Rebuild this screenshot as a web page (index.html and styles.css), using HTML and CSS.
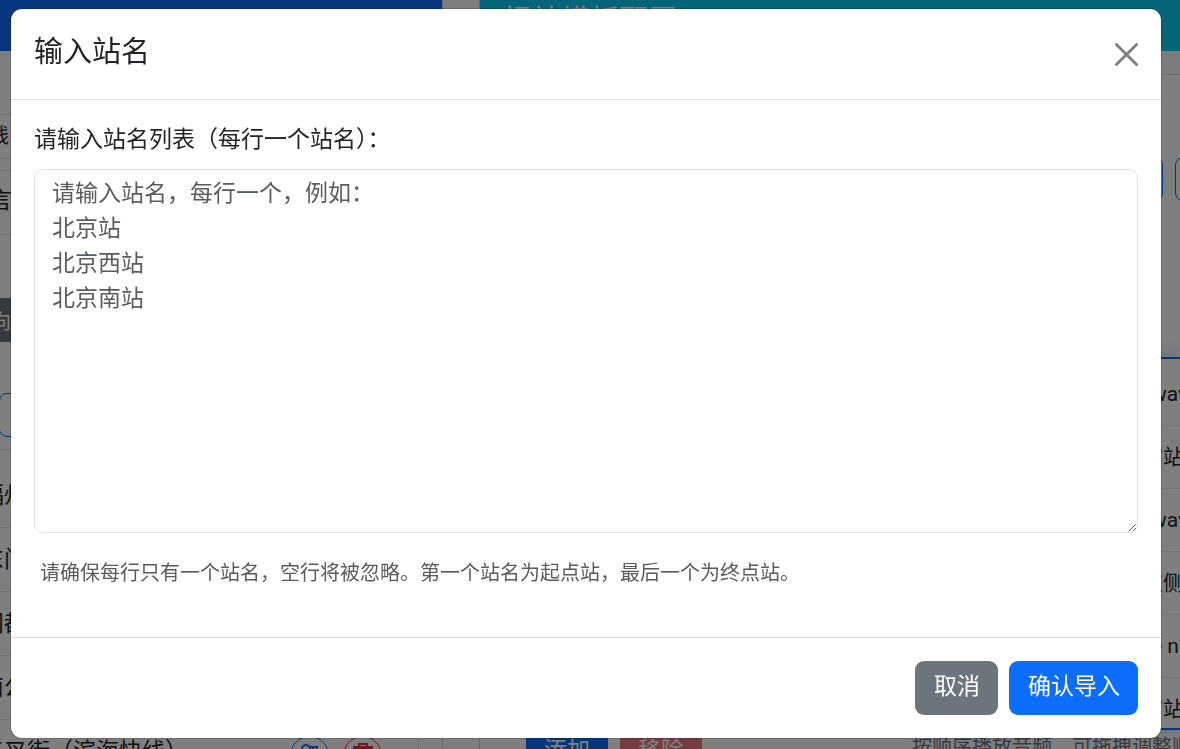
FILE: index.html
```html
<!DOCTYPE html>
<html lang="zh-CN">
<head>
    <meta charset="UTF-8">
    <meta name="viewport" content="width=device-width, initial-scale=1.0">
    <title>输入站名</title>
    <link rel="stylesheet" href="styles.css">
</head>
<body>
<div class="page" inert>
    <div class="card line-card">
        <div class="card-header bg-primary"></div>
        <div class="toolbar"></div>
        <div class="line-name">线</div>
        <div class="section-title">言</div>
        <button class="btn-direction" type="button">向</button>
        <button class="btn-outline" type="button" aria-label="站点"></button>
        <ul class="station-list">
            <li><span>福州</span></li>
            <li><span>东门</span></li>
            <li><span>闽都</span></li>
            <li><span>南公</span></li>
            <li>
                <span>三叉街（滨海快线）</span>
                <span class="actions">
                    <button class="btn-circle edit" type="button" aria-label="编辑">
                        <svg width="20" height="24" viewBox="0 0 20 24" fill="none" stroke="currentColor" stroke-width="2"><circle cx="6" cy="5" r="4"/><path d="M9 3h8v4M13 3v4"/></svg>
                    </button>
                    <button class="btn-circle remove" type="button" aria-label="删除">
                        <svg width="20" height="26" viewBox="0 0 20 26" fill="none" stroke="currentColor" stroke-width="2"><path d="M6 4V1h8v3M3 6v18h14V6M8 10v10M12 10v10"/><path d="M0 4.5h20" stroke-width="3"/></svg>
                    </button>
                </span>
            </li>
        </ul>
    </div>
    <div class="card template-card">
        <div class="card-header bg-info">报站模板配置</div>
        <div class="sub-header"></div>
        <div class="mode-buttons">
            <button class="btn-outline" type="button" aria-label="模式一"></button>
            <button class="btn-outline" type="button" aria-label="模式二"></button>
        </div>
        <ul class="audio-list">
            <li>wav</li>
            <li class="cjk">前站</li>
            <li>wav</li>
            <li class="cjk">左侧</li>
            <li>e n</li>
            <li class="cjk">前站</li>
        </ul>
        <div class="list-footer">
            <button class="btn-add" type="button">添加</button>
            <button class="btn-delete" type="button" disabled>移除</button>
            <span class="hint">按顺序播放音频，可拖拽调整顺序</span>
        </div>
    </div>
</div>

<div class="modal-backdrop">
    <div class="modal-content" role="dialog" aria-modal="true" aria-labelledby="modalTitle">
        <div class="modal-header">
            <h5 class="modal-title" id="modalTitle">输入站名</h5>
            <button class="btn-close" type="button" aria-label="关闭">
                <svg width="23" height="23" viewBox="0 0 24 24" fill="none" stroke="#000" stroke-width="3" stroke-linecap="round"><path d="M1.5 1.5l21 21M22.5 1.5l-21 21"/></svg>
            </button>
        </div>
        <div class="modal-body">
            <label class="form-label" for="stationNames">请输入站名列表（每行一个站名）：</label>
            <textarea class="form-control" id="stationNames" rows="10" placeholder="请输入站名，每行一个，例如：&#10;北京站&#10;北京西站&#10;北京南站"></textarea>
            <div class="form-text">请确保每行只有一个站名，空行将被忽略。第一个站名为起点站，最后一个为终点站。</div>
        </div>
        <div class="modal-footer">
            <button class="btn btn-secondary" type="button">取消</button>
            <button class="btn btn-primary" type="button">确认导入</button>
        </div>
    </div>
</div>
</body>
</html>
```

FILE: styles.css
```css
* {
    box-sizing: border-box;
}

body {
    margin: 0;
    height: 100vh;
    overflow: hidden;
    background-color: #fff;
    color: #212529;
    font-family: Roboto, "Noto Sans CJK SC", sans-serif;
    font-size: 23px;
    line-height: 34px;
}

button,
textarea {
    font-family: inherit;
}

ul {
    list-style: none;
    margin: 0;
    padding: 0;
}

/* Page behind the dialog */
.page {
    display: grid;
    grid-template-columns: 491px 1fr;
    gap: 36px;
    margin-left: -48px; /* page is scrolled sideways */
    height: 100vh;
    overflow: hidden;
}

.card {
    border: 1px solid #d0d0d0;
    border-top: 0;
    min-width: 0;
}

.template-card {
    border-width: 0 0 0 1px;
}

.card-header {
    height: 51px;
    padding: 4px 23px;
    font-size: 29px;
    color: #fff;
}

.bg-primary {
    background-color: #0d6efd;
}

.bg-info {
    background-color: #0dcaf0;
}

.toolbar {
    height: 64px;
    border-bottom: 1px solid #dee2e6;
}

.line-name {
    padding: 4px 0 5px 36px;
    font-size: 20px;
    border-bottom: 1px solid #dee2e6;
}

.section-title {
    margin-top: 11px;
    padding: 13px 0 16px 36px;
    border: solid #dee2e6;
    border-width: 1px 0;
}

.btn-direction {
    display: block;
    width: 70px;
    height: 44px;
    margin: 63px 0 51px 20px;
    padding: 0 0 0 18px;
    border: 0;
    background-color: #6c757d;
    color: #fff;
    font-size: 20px;
    text-align: left;
}

.btn-outline {
    display: block;
    height: 44px;
    border: 1px solid #0d6efd;
    border-radius: 8px;
    background-color: transparent;
}

.line-card .btn-outline {
    width: 80px;
    margin-left: 46px;
}

.station-list {
    margin: 12px 23px 0 0;
    padding-top: 14px;
    border: solid #dee2e6;
    border-width: 1px 1px 0 0;
}

.station-list li {
    display: flex;
    justify-content: space-between;
    align-items: center;
    height: 64px;
    padding: 0 36px 0 28px;
    border-bottom: 1px solid #dee2e6;
}

.actions {
    display: flex;
    gap: 14px;
    padding-top: 8px;
}

.btn-circle {
    display: flex;
    align-items: center;
    justify-content: center;
    width: 39px;
    height: 39px;
    padding: 0;
    border: 1px solid;
    border-radius: 50%;
    background-color: transparent;
}

.edit {
    color: #0d6efd;
}

.remove {
    color: #dc3545;
}

.sub-header {
    height: 24px;
    background-color: #f8f9fa;
    border-bottom: 1px solid #dee2e6;
}

.mode-buttons {
    display: flex;
    justify-content: flex-end;
    gap: 12px;
    margin: 82px -60px 0 0;
}

.mode-buttons .btn-outline {
    width: 65px;
}

.audio-list {
    height: 373px;
    margin: 156px 0 0 431px;
    padding-top: 4px;
    overflow: hidden;
    border: solid #0d6efd;
    border-width: 2px 0;
    box-shadow: 0 0 18px rgba(13, 110, 253, 0.25);
    font-size: 21px;
}

.audio-list li {
    height: 63px;
    padding: 16px 0 0 240px;
    border-bottom: 1px solid #e9ecef;
    line-height: 30px;
    white-space: nowrap;
}

.audio-list .cjk {
    padding-left: 231px;
}

.list-footer {
    display: flex;
    gap: 12px;
    margin: 0 -32px 0 46px;
    white-space: nowrap;
}

.list-footer button {
    padding: 0 18px;
    height: 36px;
    border: 0;
    color: #fff;
    font-size: 23px;
}

.btn-add {
    background-color: #0d6efd;
}

.btn-delete {
    background-color: #dc3545;
    opacity: 0.65;
}

.hint {
    margin-left: auto;
    color: #6c757d;
    font-size: 20px;
}

/* Dialog */
.modal-backdrop {
    position: fixed;
    inset: 0;
    overflow: auto;
    padding: 8px 18px 8px 10px;
    background-color: rgba(0, 0, 0, 0.5);
}

.modal-content {
    max-width: 1152px;
    margin: 0 auto;
    border: 1px solid rgba(0, 0, 0, 0.175);
    border-radius: 12px;
    background-color: #fff;
    background-clip: padding-box;
}

.modal-header {
    display: flex;
    align-items: center;
    justify-content: space-between;
    padding: 23px;
    border-bottom: 1px solid #dee2e6;
}

.modal-title {
    margin: 0;
    padding-bottom: 4px;
    font-size: 29px;
    font-weight: 400;
    line-height: 40px;
}

.btn-close {
    display: flex;
    padding: 0;
    border: 0;
    background-color: transparent;
    opacity: 0.5;
    cursor: pointer;
}

.modal-body {
    padding: 23px 23px 49px;
}

.form-label {
    display: block;
    margin-bottom: 12px;
}

.form-control {
    display: block;
    width: 100%;
    height: 364px;
    padding: 6px 17px;
    border: 1px solid #dee2e6;
    border-radius: 9px;
    color: #212529;
    font-size: 23px;
    line-height: 35px;
    resize: vertical;
}

.form-control::placeholder {
    color: #595c5f;
}

.form-text {
    margin-top: 25px;
    padding-left: 6px;
    color: #595c5f;
    font-size: 20px;
    line-height: 30px;
}

.modal-footer {
    display: flex;
    justify-content: flex-end;
    gap: 11px;
    padding: 23px;
    border-top: 1px solid #dee2e6;
}

.btn {
    padding: 9px 18px 11px 19px;
    border: 0;
    border-radius: 9px;
    color: #fff;
    font-size: 23px;
    line-height: 34px;
    cursor: pointer;
}

.btn-secondary {
    background-color: #6c757d;
}

.btn-primary {
    background-color: #0d6efd;
}
```
